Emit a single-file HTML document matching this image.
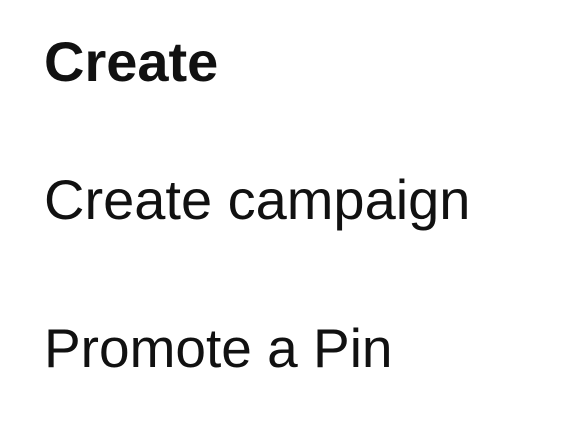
<!DOCTYPE html>
<html><head><meta charset="utf-8"><style>
html,body{margin:0;padding:0;width:564px;height:424px;background:#fff;overflow:hidden}
div{position:absolute;left:44px;font-family:"Liberation Sans",sans-serif;color:#111;line-height:1;white-space:nowrap}
.h{font-weight:bold;font-size:56px;top:34px}
.a{font-size:56px;top:172px}
.b{font-size:55px;top:321px}
</style></head><body>
<div class="h">Create</div>
<div class="a">Create campaign</div>
<div class="b">Promote a Pin</div>
</body></html>
